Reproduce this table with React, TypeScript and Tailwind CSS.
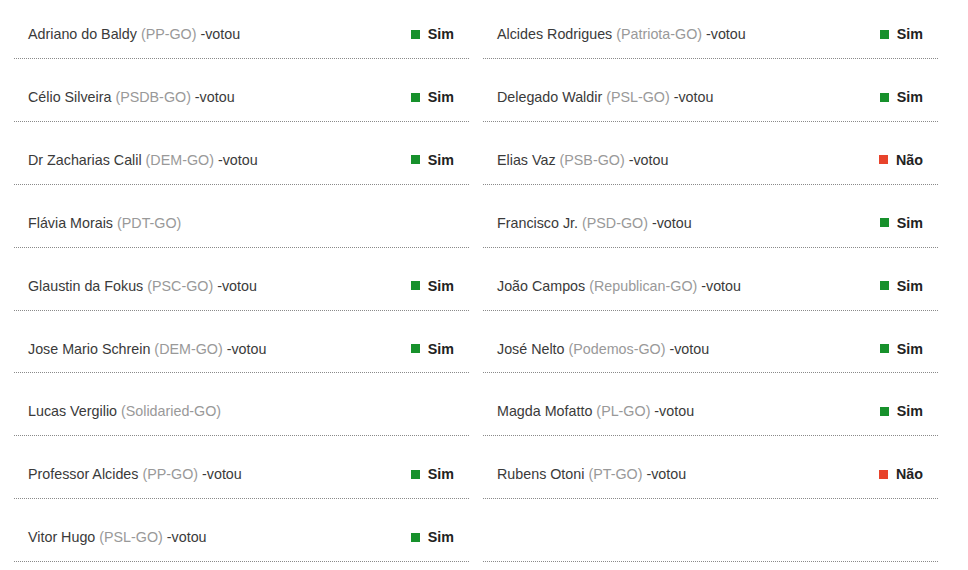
import React from 'react';

type Vote = 'Sim' | 'Não' | null;

interface Deputy {
  name: string;
  party: string;
  vote: Vote;
}

const LEFT: Deputy[] = [
  { name: 'Adriano do Baldy', party: 'PP-GO', vote: 'Sim' },
  { name: 'Célio Silveira', party: 'PSDB-GO', vote: 'Sim' },
  { name: 'Dr Zacharias Calil', party: 'DEM-GO', vote: 'Sim' },
  { name: 'Flávia Morais', party: 'PDT-GO', vote: null },
  { name: 'Glaustin da Fokus', party: 'PSC-GO', vote: 'Sim' },
  { name: 'Jose Mario Schrein', party: 'DEM-GO', vote: 'Sim' },
  { name: 'Lucas Vergilio', party: 'Solidaried-GO', vote: null },
  { name: 'Professor Alcides', party: 'PP-GO', vote: 'Sim' },
  { name: 'Vitor Hugo', party: 'PSL-GO', vote: 'Sim' },
];

const RIGHT: Deputy[] = [
  { name: 'Alcides Rodrigues', party: 'Patriota-GO', vote: 'Sim' },
  { name: 'Delegado Waldir', party: 'PSL-GO', vote: 'Sim' },
  { name: 'Elias Vaz', party: 'PSB-GO', vote: 'Não' },
  { name: 'Francisco Jr.', party: 'PSD-GO', vote: 'Sim' },
  { name: 'João Campos', party: 'Republican-GO', vote: 'Sim' },
  { name: 'José Nelto', party: 'Podemos-GO', vote: 'Sim' },
  { name: 'Magda Mofatto', party: 'PL-GO', vote: 'Sim' },
  { name: 'Rubens Otoni', party: 'PT-GO', vote: 'Não' },
];

function Row({ d }: { d: Deputy | null }) {
  return (
    <li className="h-[62.875px] border-b border-dotted border-[#8a8a8a] pl-[14px] pr-[15px] pt-[29px] flex justify-between items-start text-[14.3px] leading-[18px] text-[#3a3a3a]">
      {d && (
        <>
          <span>
            {d.name} <span className="text-[#999]">({d.party})</span>
            {d.vote && ' -votou'}
          </span>
          {d.vote && (
            <span className="flex items-center gap-[8px] font-bold text-[#222]">
              <span className={`w-[9px] h-[9px] ${d.vote === 'Sim' ? 'bg-[#17912c]' : 'bg-[#e8432b]'}`} />
              {d.vote}
            </span>
          )}
        </>
      )}
    </li>
  );
}

export default function App() {
  const rightRows: (Deputy | null)[] = [...RIGHT, null];
  return (
    <div className="w-[968px] h-[570px] overflow-hidden bg-white" style={{ fontFamily: '"Liberation Sans", Arial, sans-serif' }}>
      <div className="flex gap-[14px] pl-[14px] -mt-[3.875px]">
        <ul className="w-[455px]">
          {LEFT.map((d, i) => (
            <Row key={i} d={d} />
          ))}
        </ul>
        <ul className="w-[455px]">
          {rightRows.map((d, i) => (
            <Row key={i} d={d} />
          ))}
        </ul>
      </div>
    </div>
  );
}
